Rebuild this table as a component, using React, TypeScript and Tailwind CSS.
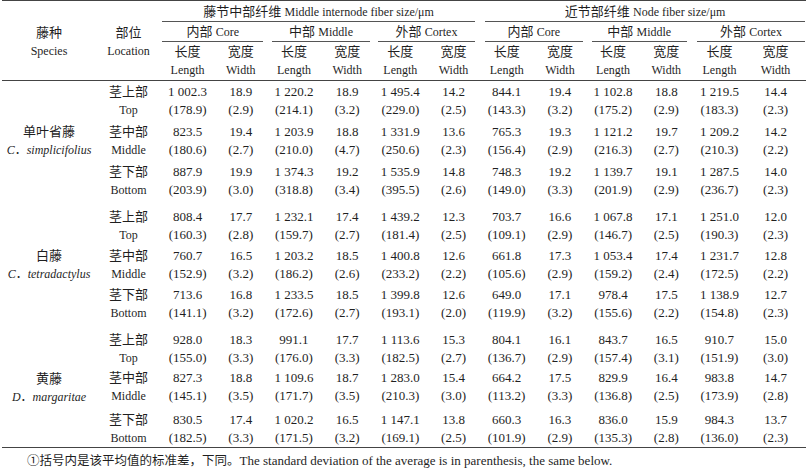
import React from "react";

type Row = { loc: string; en: string; v: string[]; sd: string[] };
type Group = { cn: string; genus: string; sp: string; rows: Row[] };

const groups: Group[] = [
  {
    cn: "单叶省藤",
    genus: "C．",
    sp: "simplicifolius",
    rows: [
      {
        loc: "茎上部",
        en: "Top",
        v: ["1 002.3", "18.9", "1 220.2", "18.9", "1 495.4", "14.2", "844.1", "19.4", "1 102.8", "18.8", "1 219.5", "14.4"],
        sd: ["(178.9)", "(2.9)", "(214.1)", "(3.2)", "(229.0)", "(2.5)", "(143.3)", "(3.2)", "(175.2)", "(2.9)", "(183.3)", "(2.3)"],
      },
      {
        loc: "茎中部",
        en: "Middle",
        v: ["823.5", "19.4", "1 203.9", "18.8", "1 331.9", "13.6", "765.3", "19.3", "1 121.2", "19.7", "1 209.2", "14.2"],
        sd: ["(180.6)", "(2.7)", "(210.0)", "(4.7)", "(250.6)", "(2.3)", "(156.4)", "(2.9)", "(216.3)", "(2.7)", "(210.3)", "(2.2)"],
      },
      {
        loc: "茎下部",
        en: "Bottom",
        v: ["887.9", "19.9", "1 374.3", "19.2", "1 535.9", "14.8", "748.3", "19.2", "1 139.7", "19.1", "1 287.5", "14.0"],
        sd: ["(203.9)", "(3.0)", "(318.8)", "(3.4)", "(395.5)", "(2.6)", "(149.0)", "(3.3)", "(201.9)", "(2.9)", "(236.7)", "(2.3)"],
      },
    ],
  },
  {
    cn: "白藤",
    genus: "C．",
    sp: "tetradactylus",
    rows: [
      {
        loc: "茎上部",
        en: "Top",
        v: ["808.4", "17.7", "1 232.1", "17.4", "1 439.2", "12.3", "703.7", "16.6", "1 067.8", "17.1", "1 251.0", "12.0"],
        sd: ["(160.3)", "(2.8)", "(159.7)", "(2.7)", "(181.4)", "(2.5)", "(109.1)", "(2.9)", "(146.7)", "(2.5)", "(190.3)", "(2.3)"],
      },
      {
        loc: "茎中部",
        en: "Middle",
        v: ["760.7", "16.5", "1 203.2", "18.5", "1 400.8", "12.6", "661.8", "17.3", "1 053.4", "17.4", "1 231.7", "12.8"],
        sd: ["(152.9)", "(3.2)", "(186.2)", "(2.6)", "(233.2)", "(2.2)", "(105.6)", "(2.9)", "(159.2)", "(2.4)", "(172.5)", "(2.2)"],
      },
      {
        loc: "茎下部",
        en: "Bottom",
        v: ["713.6", "16.8", "1 233.5", "18.5", "1 399.8", "12.6", "649.0", "17.1", "978.4", "17.5", "1 138.9", "12.7"],
        sd: ["(141.1)", "(3.2)", "(172.6)", "(2.7)", "(193.1)", "(2.0)", "(119.9)", "(3.2)", "(155.6)", "(2.2)", "(154.8)", "(2.3)"],
      },
    ],
  },
  {
    cn: "黄藤",
    genus: "D．",
    sp: "margaritae",
    rows: [
      {
        loc: "茎上部",
        en: "Top",
        v: ["928.0", "18.3", "991.1", "17.7", "1 113.6", "15.3", "804.1", "16.1", "843.7", "16.5", "910.7", "15.0"],
        sd: ["(155.0)", "(3.3)", "(176.0)", "(3.3)", "(182.5)", "(2.7)", "(136.7)", "(2.9)", "(157.4)", "(3.1)", "(151.9)", "(3.0)"],
      },
      {
        loc: "茎中部",
        en: "Middle",
        v: ["827.3", "18.8", "1 109.6", "18.7", "1 283.0", "15.4", "664.2", "17.5", "829.9", "16.4", "983.8", "14.7"],
        sd: ["(145.1)", "(3.5)", "(171.7)", "(3.5)", "(210.3)", "(3.0)", "(113.2)", "(3.3)", "(136.8)", "(2.5)", "(173.9)", "(2.8)"],
      },
      {
        loc: "茎下部",
        en: "Bottom",
        v: ["830.5", "17.4", "1 020.2", "16.5", "1 147.1", "13.8", "660.3", "16.3", "836.0", "15.9", "984.3", "13.7"],
        sd: ["(182.5)", "(3.3)", "(171.5)", "(3.2)", "(169.1)", "(2.5)", "(101.9)", "(2.9)", "(135.3)", "(2.8)", "(136.0)", "(2.3)"],
      },
    ],
  },
];

const groupRows = [
  "grid-rows-[40px_40px_40px]",
  "grid-rows-[39px_39px_39px] mt-[5px]",
  "grid-rows-[38px_42px_38px] mt-[6px] border-b border-[#444]",
];

const subHeads = [
  ["内部", "Core"],
  ["中部", "Middle"],
  ["外部", "Cortex"],
  ["内部", "Core"],
  ["中部", "Middle"],
  ["外部", "Cortex"],
];

const subMargins = [
  "ml-[1px] mr-[4px]",
  "ml-[5px] mr-[4px]",
  "ml-[4px] mr-[5px]",
  "ml-[5px] mr-[4px]",
  "ml-[5px] mr-[6px]",
  "ml-[4px] mr-0",
];

export default function App() {
  return (
    <div className="w-[811px] h-[469px] bg-white overflow-hidden text-[#1f1f1f] font-['Liberation_Serif','Noto_Sans_CJK_SC',serif] text-[13px]">
      <div className="ml-[2px] w-[804px]">
        {/* Header */}
        <div className="grid grid-cols-[94px_65px_repeat(11,53.2px)_59px] grid-rows-[21px_20px_38px] border-t border-b border-[#444]">
          <div className="row-span-3 flex flex-col items-center pt-[23px] leading-[18px]">
            <span>藤种</span>
            <span className="text-[12px]">Species</span>
          </div>
          <div className="row-span-3 flex flex-col items-center pt-[23px] leading-[18px]">
            <span>部位</span>
            <span className="text-[12px]">Location</span>
          </div>
          <div className="col-span-6 ml-[1px] mr-[5px] border-b border-[#555] flex justify-center pt-[2px] leading-[18px]">
            <span>
              藤节中部纤维 <span className="text-[12px]">Middle internode fiber size/μm</span>
            </span>
          </div>
          <div className="col-span-6 ml-[5px] border-b border-[#555] flex justify-center pt-[2px] leading-[18px]">
            <span>
              近节部纤维 <span className="text-[12px]">Node fiber size/μm</span>
            </span>
          </div>
          {subHeads.map((s, i) => (
            <div
              key={i}
              className={`col-span-2 ${subMargins[i]} border-b border-[#555] flex justify-center pt-[1px] leading-[18px]`}
            >
              <span>
                {s[0]} <span className="text-[12px]">{s[1]}</span>
              </span>
            </div>
          ))}
          {Array.from({ length: 12 }).map((_, i) => (
            <div key={i} className="flex flex-col items-center pt-[1px] leading-[18px]">
              <span>{i % 2 === 0 ? "长度" : "宽度"}</span>
              <span className="text-[12px]">{i % 2 === 0 ? "Length" : "Width"}</span>
            </div>
          ))}
        </div>

        {/* Body */}
        {groups.map((g, gi) => (
          <div
            key={gi}
            className={`grid grid-cols-[94px_65px_repeat(11,53.2px)_59px] ${groupRows[gi]}`}
          >
            <div className="row-span-3 flex flex-col items-center justify-center leading-[18px]">
              <span>{g.cn}</span>
              <span className="text-[12px]">
                <span className="italic">{g.genus.charAt(0)}</span>
                <span>{g.genus.slice(1)}</span>
                <span className="italic">{g.sp}</span>
              </span>
            </div>
            {g.rows.map((r, ri) => (
              <React.Fragment key={ri}>
                <div className="flex flex-col items-center pt-[2px] leading-[18px]">
                  <span>{r.loc}</span>
                  <span className="text-[12px]">{r.en}</span>
                </div>
                {r.v.map((v, ci) => (
                  <div key={ci} className="flex flex-col items-center pt-[2px] leading-[18px] whitespace-pre">
                    <span>{v}</span>
                    <span>{r.sd[ci]}</span>
                  </div>
                ))}
              </React.Fragment>
            ))}
          </div>
        ))}

        {/* Footnote */}
        <div className="pl-[25px] pt-[4px] leading-[18px] whitespace-nowrap text-[12.5px]">
          ①括号内是该平均值的标准差，下同。
          <span className="text-[13px]">The standard deviation of the average is in parenthesis, the same below.</span>
        </div>
      </div>
    </div>
  );
}
